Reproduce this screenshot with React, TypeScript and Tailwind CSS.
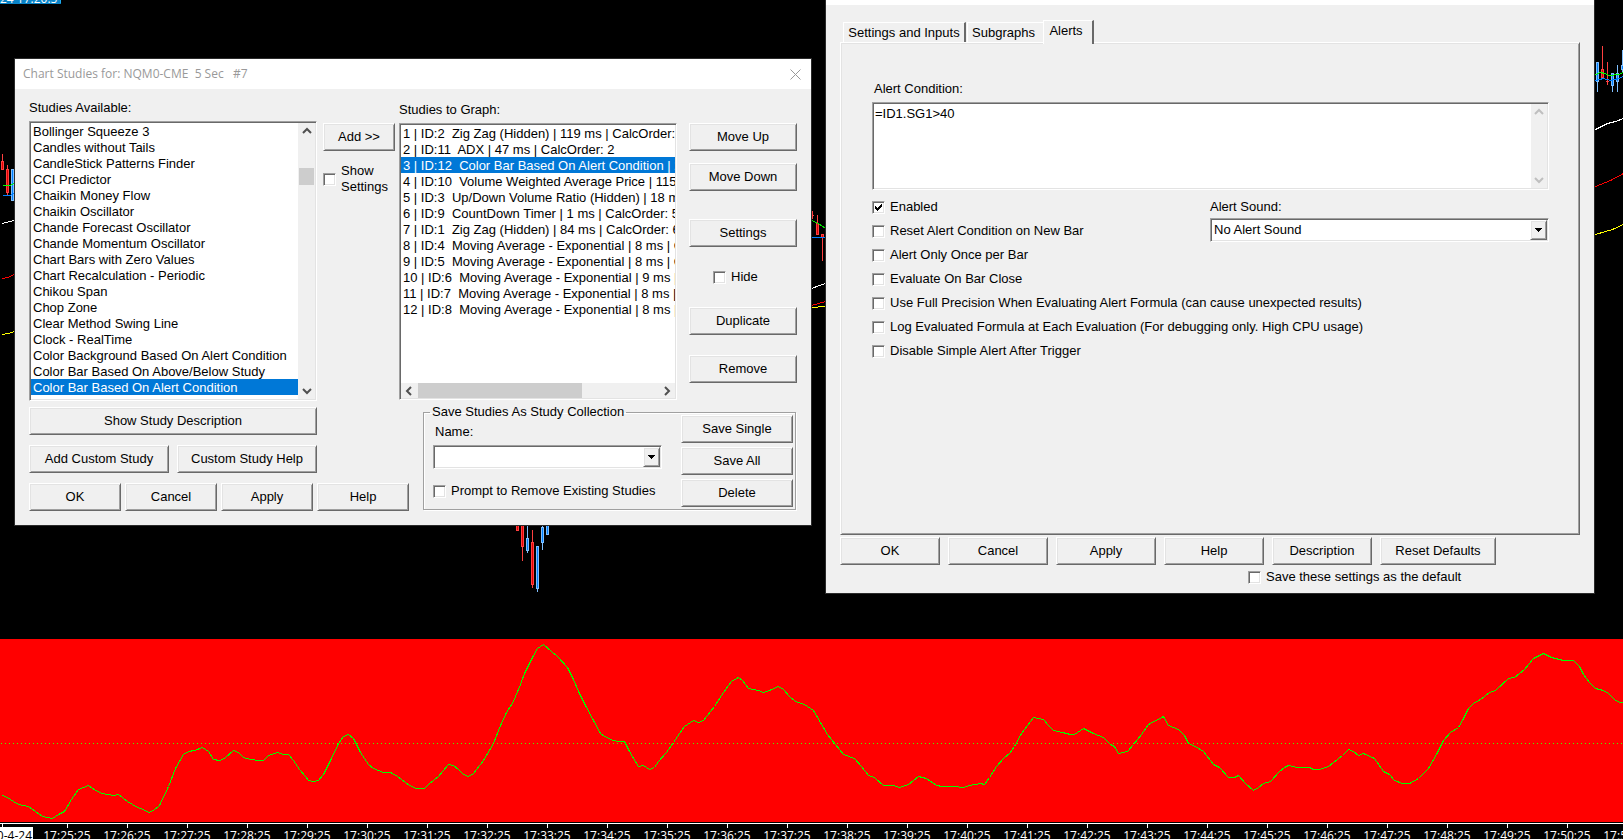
import { useId, useState } from "react";
import type { ReactNode } from "react";
import clsx from "clsx";

const AVAILABLE = [
  "Bollinger Squeeze 3",
  "Candles without Tails",
  "CandleStick Patterns Finder",
  "CCI Predictor",
  "Chaikin Money Flow",
  "Chaikin Oscillator",
  "Chande Forecast Oscillator",
  "Chande Momentum Oscillator",
  "Chart Bars with Zero Values",
  "Chart Recalculation - Periodic",
  "Chikou Span",
  "Chop Zone",
  "Clear Method Swing Line",
  "Clock - RealTime",
  "Color Background Based On Alert Condition",
  "Color Bar Based On Above/Below Study",
  "Color Bar Based On Alert Condition",
  "Color Bar Based On Slope",
];

const GRAPHED = [
  "1 | ID:2  Zig Zag (Hidden) | 119 ms | CalcOrder: 1",
  "2 | ID:11  ADX | 47 ms | CalcOrder: 2",
  "3 | ID:12  Color Bar Based On Alert Condition | 2 ms",
  "4 | ID:10  Volume Weighted Average Price | 115 ms",
  "5 | ID:3  Up/Down Volume Ratio (Hidden) | 18 ms",
  "6 | ID:9  CountDown Timer | 1 ms | CalcOrder: 5",
  "7 | ID:1  Zig Zag (Hidden) | 84 ms | CalcOrder: 6",
  "8 | ID:4  Moving Average - Exponential | 8 ms | CalcOrder: 8",
  "9 | ID:5  Moving Average - Exponential | 8 ms | CalcOrder: 9",
  "10 | ID:6  Moving Average - Exponential | 9 ms | CalcOrder: 10",
  "11 | ID:7  Moving Average - Exponential | 8 ms | CalcOrder: 11",
  "12 | ID:8  Moving Average - Exponential | 8 ms | CalcOrder: 12",
];

const ALERT_OPTIONS = [
  "Enabled",
  "Reset Alert Condition on New Bar",
  "Alert Only Once per Bar",
  "Evaluate On Bar Close",
  "Use Full Precision When Evaluating Alert Formula (can cause unexpected results)",
  "Log Evaluated Formula at Each Evaluation (For debugging only. High CPU usage)",
  "Disable Simple Alert After Trigger",
];

const TIMES = Array.from({ length: 27 }, (_, i) => `17:${25 + i}:25`);

// x, wick high, body top, body bottom, wick low, rising
type Bar = [number, number, number, number, number, boolean];

const BARS: Bar[] = [
  [2, 154, 161, 170, 170, false],
  [7, 165, 169, 193, 195, false],
  [12, 169, 169, 201, 201, true],
  [517, 520, 520, 531, 531, false],
  [522, 520, 520, 547, 561, false],
  [527, 520, 538, 551, 553, true],
  [532, 530, 542, 585, 588, false],
  [537, 546, 546, 589, 592, true],
  [542, 520, 527, 543, 550, true],
  [547, 520, 520, 535, 535, true],
  [812, 211, 215, 216, 219, false],
  [817, 215, 223, 235, 235, false],
  [822, 234, 234, 238, 261, false],
  [1597, 62, 62, 82, 92, true],
  [1602, 46, 69, 78, 78, false],
  [1607, 62, 81, 82, 85, false],
  [1612, 73, 73, 86, 92, true],
  [1617, 65, 73, 82, 92, true],
  [1622, 50, 65, 70, 72, true],
];

const OVERLAYS = [
  { color: "#00ff00", points: "2,185 9,185 14,183" },
  { color: "#0080ff", points: "2,195 9,195 14,193" },
  { color: "#ffffff", points: "2,223 9,221 14,220" },
  { color: "#ff0000", points: "2,278 7,277 14,274" },
  { color: "#ffff00", points: "2,334 8,333 14,331" },
  { color: "#00e000", points: "811,220 818,223 825,228" },
  { color: "#0080ff", points: "811,237 825,237" },
  { color: "#ffffff", points: "811,288 819,285 825,283" },
  { color: "#ff0000", points: "811,305 818,303 825,301" },
  { color: "#ffff00", points: "811,307 825,306" },
  { color: "#00ff00", points: "1595,74 1600,72 1604,73 1609,75 1618,74 1623,72" },
  { color: "#0080ff", points: "1595,80 1603,78 1610,80 1618,78 1623,76" },
  { color: "#ffffff", points: "1595,129 1607,123 1615,121 1623,118" },
  { color: "#ff0000", points: "1595,186 1610,180 1623,173" },
  { color: "#ffff00", points: "1595,234 1612,229 1623,224" },
];

const ADX_LINE =
  "2,156 7,158 13,162 18,165 28,167 35,172 42,177 52,179 58,175 64,172 71,160 78,150 88,146 95,151 102,154 113,156 118,155 127,162 137,168 143,170 148,173 153,171 159,166 168,147 175,129 183,115 188,112 194,111 202,108 208,112 213,120 219,121 224,119 233,111 238,113 243,118 250,120 258,121 263,121 268,116 277,113 283,115 288,115 293,121 299,130 305,137 308,141 313,142 318,141 323,135 330,121 338,104 343,97 348,95 353,99 360,113 368,125 373,129 383,133 390,133 397,137 409,146 416,149 424,149 429,144 438,137 443,131 448,125 453,126 458,130 463,135 468,137 473,134 483,121 493,104 500,86 506,73 513,62 520,45 524,34 532,18 537,9 543,5 551,12 557,17 567,28 573,40 578,52 585,66 593,81 600,94 604,97 613,101 618,102 624,102 629,112 638,127 643,126 649,130 654,128 658,122 666,113 673,103 679,94 684,87 693,81 698,83 703,81 714,67 723,53 731,42 738,38 742,41 748,49 758,51 763,53 769,51 778,47 783,50 789,57 795,62 804,65 813,71 820,83 827,95 835,105 843,115 854,119 861,127 868,136 874,138 883,146 893,146 899,148 908,145 918,137 926,139 936,146 942,147 953,147 963,148 969,146 980,144 984,145 989,138 996,127 1004,118 1009,114 1014,107 1021,94 1033,78 1043,80 1048,86 1053,91 1062,93 1070,95 1074,95 1083,89 1093,94 1103,98 1110,105 1114,107 1118,114 1127,112 1133,105 1141,95 1148,85 1163,77 1168,86 1178,90 1184,96 1188,104 1195,107 1203,112 1213,125 1219,128 1228,138 1234,138 1238,136 1245,144 1253,151 1258,148 1263,144 1270,142 1279,132 1284,128 1288,126 1297,128 1309,128 1313,130 1319,130 1328,127 1342,116 1348,110 1353,112 1358,116 1363,114 1374,119 1383,132 1389,135 1394,141 1402,144 1409,144 1418,139 1428,129 1436,115 1443,101 1450,93 1458,88 1463,79 1468,69 1473,64 1480,60 1489,53 1495,51 1508,39 1514,38 1524,30 1533,19 1543,14 1551,18 1563,21 1573,21 1579,27 1583,35 1589,43 1595,49 1603,51 1608,54 1614,60 1619,63 1623,63";

const RAISED =
  "border border-t-white border-l-white border-r-[#696969] border-b-[#696969] shadow-[inset_1px_1px_#e3e3e3,inset_-1px_-1px_#a0a0a0]";
const SUNKEN =
  "border border-t-[#a0a0a0] border-l-[#a0a0a0] border-r-white border-b-white shadow-[inset_1px_1px_#696969,inset_-1px_-1px_#e3e3e3]";

function PushButton({ children, className }: { children: ReactNode; className?: string }) {
  return (
    <button type="button" className={clsx("h-7 bg-[#f0f0f0] text-center whitespace-nowrap", RAISED, className)}>
      {children}
    </button>
  );
}

function CheckBox({ label, checked = false, className }: { label: string; checked?: boolean; className?: string }) {
  const [on, setOn] = useState(checked);
  return (
    <label className={clsx("flex items-center gap-[5px]", className)}>
      <span className="relative flex shrink-0">
        <input
          type="checkbox"
          checked={on}
          onChange={() => setOn(!on)}
          className={clsx("h-[13px] w-[13px] appearance-none bg-white", SUNKEN)}
        />
        {on && (
          <svg className="pointer-events-none absolute top-[3px] left-[3px]" width="7" height="7" shapeRendering="crispEdges">
            <path d="M0 2v3h1v1h1v1h1v-1h1v-1h1v-1h1v-1h1v-3h-1v1h-1v1h-1v1h-1v1h-1v-1h-1v-1z" />
          </svg>
        )}
      </span>
      <span>{label}</span>
    </label>
  );
}

const ARROWS = {
  up: "M4 10l4-4 4 4",
  down: "M4 6l4 4 4-4",
  left: "M10 4l-4 4 4 4",
  right: "M6 4l4 4-4 4",
};

function ScrollArrow({ dir, color = "#505050" }: { dir: keyof typeof ARROWS; color?: string }) {
  return (
    <button type="button" aria-label={`Scroll ${dir}`} className="flex h-4 w-4 shrink-0 items-center justify-center">
      <svg width="16" height="16" viewBox="0 0 16 16" fill="none" stroke={color} strokeWidth="2">
        <path d={ARROWS[dir]} />
      </svg>
    </button>
  );
}

function ListItems({ items, selected }: { items: string[]; selected: number }) {
  const [current, setCurrent] = useState(selected);
  return (
    <ul role="listbox" className="min-w-0 flex-1 overflow-hidden bg-white leading-[18px]">
      {items.map((item, i) => (
        <li
          key={item}
          role="option"
          aria-selected={i === current}
          onClick={() => setCurrent(i)}
          className={clsx("h-4 overflow-hidden pl-0.5 whitespace-pre", i === current && "bg-[#0078d7] text-white")}
        >
          {item}
        </li>
      ))}
    </ul>
  );
}

function DropDown({ id, options }: { id: string; options: string[] }) {
  return (
    <div className={clsx("relative flex h-6 bg-white p-px", SUNKEN)}>
      <select id={id} className="h-full w-full appearance-none bg-transparent pl-0.5 outline-none">
        {options.map((o) => (
          <option key={o}>{o}</option>
        ))}
      </select>
      <span
        className={clsx(
          "pointer-events-none absolute inset-y-px right-px flex w-[17px] items-center justify-center bg-[#f0f0f0]",
          RAISED
        )}
      >
        <svg width="7" height="4" shapeRendering="crispEdges">
          <path d="M0 0h7v1h-1v1h-1v1h-1v1h-1v-1h-1v-1h-1v-1h-1z" />
        </svg>
      </span>
    </div>
  );
}

function ChartStudiesWindow() {
  const nameId = useId();
  return (
    <section className="absolute top-[58px] left-[14px] w-[798px] border border-[#2b2b2b] bg-[#f0f0f0]">
      <header className="flex h-[30px] items-center justify-between bg-white pr-2 pl-2">
        <h1 className="font-['Open_Sans','Noto_Sans',sans-serif] text-[12px] whitespace-pre text-[#999999]">
          Chart Studies for: NQM0-CME{"  "}5 Sec{"   "}#7
        </h1>
        <button type="button" aria-label="Close" className="flex h-4 w-4 items-center justify-center">
          <svg width="11" height="11" stroke="#999999" fill="none">
            <path d="M0.5 0.5l10 10M10.5 0.5l-10 10" />
          </svg>
        </button>
      </header>

      <div className="px-[14px] pt-[11px] pb-[14px]">
        <div className="flex">
          <div className="w-72">
            <h2>Studies Available:</h2>
            <div className={clsx("mt-[5px] flex h-[280px] p-px", SUNKEN)}>
              <ListItems items={AVAILABLE} selected={16} />
              <div className="flex w-[17px] flex-col items-center bg-[#f0f0f0]">
                <ScrollArrow dir="up" />
                <div className="mt-[29px] h-[17px] w-[15px] bg-[#cdcdcd]" />
                <div className="flex-1" />
                <ScrollArrow dir="down" />
              </div>
            </div>
          </div>

          <div className="ml-1.5 flex w-[72px] flex-col pt-[23px]">
            <PushButton>Add &gt;&gt;</PushButton>
            <CheckBox label="Show Settings" className="mt-3" />
          </div>

          <div className="ml-1 w-[278px] pt-0.5">
            <h2>Studies to Graph:</h2>
            <div className={clsx("mt-[5px] flex h-[277px] flex-col p-px", SUNKEN)}>
              <div className="flex min-h-0 flex-1">
                <ListItems items={GRAPHED} selected={2} />
              </div>
              <div className="flex h-[15px] items-center bg-[#f0f0f0]">
                <ScrollArrow dir="left" />
                <div className="ml-px h-[15px] w-[164px] bg-[#cdcdcd]" />
                <div className="flex-1" />
                <ScrollArrow dir="right" />
              </div>
            </div>
          </div>

          <div className="ml-3 flex flex-1 flex-col pt-[23px]">
            <PushButton>Move Up</PushButton>
            <PushButton className="mt-3">Move Down</PushButton>
            <PushButton className="mt-7">Settings</PushButton>
            <CheckBox label="Hide" className="mt-[22px] ml-6 h-4" />
            <PushButton className="mt-[22px]">Duplicate</PushButton>
            <PushButton className="mt-5">Remove</PushButton>
          </div>
        </div>

        <div className="mt-[3px] flex justify-between">
          <div className="pt-[3px]">
            <div className="w-72">
              <PushButton className="w-full">Show Study Description</PushButton>
              <div className="mt-2.5 flex gap-2">
                <PushButton className="flex-1">Add Custom Study</PushButton>
                <PushButton className="flex-1">Custom Study Help</PushButton>
              </div>
            </div>
            <div className="mt-2.5 flex gap-1">
              <PushButton className="w-[92px]">OK</PushButton>
              <PushButton className="w-[92px]">Cancel</PushButton>
              <PushButton className="w-[92px]">Apply</PushButton>
              <PushButton className="w-[92px]">Help</PushButton>
            </div>
          </div>

          <fieldset className="mr-px flex h-[106px] w-[373px] border border-[#a0a0a0] pr-0.5 pl-[9px] shadow-[1px_1px_#fff,inset_1px_1px_#fff]">
            <legend className="-ml-[3px] h-4 px-0.5">Save Studies As Study Collection</legend>
            <div className="flex w-full justify-between">
              <div className="w-[229px]">
                <label htmlFor={nameId} className="block pt-1 pl-0.5">
                  Name:
                </label>
                <div className="mt-[5px]">
                  <DropDown id={nameId} options={[""]} />
                </div>
                <CheckBox label="Prompt to Remove Existing Studies" className="mt-[14px] h-4" />
              </div>
              <div className="-mt-[5px] flex w-28 flex-col gap-1">
                <PushButton>Save Single</PushButton>
                <PushButton>Save All</PushButton>
                <PushButton>Delete</PushButton>
              </div>
            </div>
          </fieldset>
        </div>
      </div>
    </section>
  );
}

function AlertSettingsWindow() {
  const soundId = useId();
  const conditionId = useId();
  return (
    <section className="absolute top-0 left-[825px] w-[770px] border border-t-0 border-[#2b2b2b] bg-[#f0f0f0]">
      <div className="h-[5px] bg-white" />
      <div className="px-[14px] pt-[15px] pb-2">
        <div role="tablist" className="flex h-[22px] items-end pl-[3px]">
          <button
            role="tab"
            className="h-5 w-[123px] border-t border-r-2 border-l border-t-white border-r-[#696969] border-l-white whitespace-nowrap"
          >
            Settings and Inputs
          </button>
          <button role="tab" className="ml-px h-5 w-[76px] border-t border-l border-white pr-1">
            Subgraphs
          </button>
          <button
            role="tab"
            aria-selected="true"
            className="relative -mb-0.5 h-6 w-[51px] border-t border-r-2 border-l border-t-white border-r-[#696969] border-l-white bg-[#f0f0f0] pr-1 pb-1"
          >
            Alerts
          </button>
        </div>

        <div className={clsx("h-[493px] pt-[38px] pr-[30px] pl-[31px]", RAISED)}>
          <label htmlFor={conditionId} className="block pl-0.5">
            Alert Condition:
          </label>
          <div className={clsx("mt-[5px] flex h-[88px] bg-white p-px", SUNKEN)}>
            <textarea
              id={conditionId}
              defaultValue="=ID1.SG1>40"
              className="flex-1 resize-none overflow-hidden pt-0.5 pl-px outline-none"
            />
            <div className="flex w-4 flex-col justify-between bg-[#f0f0f0]">
              <ScrollArrow dir="up" color="#bfbfbf" />
              <ScrollArrow dir="down" color="#bfbfbf" />
            </div>
          </div>

          <div className="flex justify-between pt-[9px]">
            <div className="flex flex-col gap-2">
              {ALERT_OPTIONS.map((label, i) => (
                <CheckBox key={label} label={label} checked={i === 0} className="h-4 whitespace-nowrap" />
              ))}
            </div>
            <div className="-ml-40 w-[339px] shrink-0 self-start">
              <label htmlFor={soundId} className="block">
                Alert Sound:
              </label>
              <div className="mt-[3px]">
                <DropDown id={soundId} options={["No Alert Sound"]} />
              </div>
            </div>
          </div>
        </div>

        <div className="mt-0.5 flex gap-2">
          <PushButton className="w-[100px]">OK</PushButton>
          <PushButton className="w-[100px]">Cancel</PushButton>
          <PushButton className="w-[100px]">Apply</PushButton>
          <PushButton className="w-[100px]">Help</PushButton>
          <PushButton className="w-[100px]">Description</PushButton>
          <PushButton className="w-[116px]">Reset Defaults</PushButton>
        </div>
        <CheckBox label="Save these settings as the default" className="mt-1 ml-[408px] h-4" />
      </div>
    </section>
  );
}

function PriceChart() {
  return (
    <svg className="h-full w-full" shapeRendering="crispEdges" fill="none">
      {BARS.map(([x, high, top, bottom, low, rising]) => {
        const edge = rising ? "#80c0ff" : "#ff4040";
        return (
          <g key={x}>
            <path d={`M${x + 0.5} ${high}V${low}`} stroke={edge} />
            <rect x={x - 1} y={top} width="3" height={bottom - top} fill={edge} />
            {bottom - top > 2 && (
              <rect x={x} y={top + 1} width="1" height={bottom - top - 2} fill={rising ? "#0080ff" : "#e00000"} />
            )}
          </g>
        );
      })}
      {OVERLAYS.map((line) => (
        <polyline key={line.points} points={line.points} stroke={line.color} transform="translate(0.5 0.5)" />
      ))}
    </svg>
  );
}

export default function App() {
  return (
    <main className="relative flex h-screen flex-col overflow-hidden bg-black font-['Liberation_Sans',Arial,sans-serif] text-[13px] leading-4 text-black">
      <div className="relative min-h-0 flex-1">
        <PriceChart />
        <div className="absolute top-0 left-0 flex h-1 w-[61px] items-end overflow-hidden bg-[#0a84c8] font-['Open_Sans','Noto_Sans',sans-serif] text-[12px] whitespace-nowrap text-white">
          <span className="-mb-[3px]">24 17:20:51</span>
        </div>
      </div>

      <div className="h-[183px] bg-[#ff0000]">
        <svg className="h-full w-full" shapeRendering="crispEdges" fill="none">
          <line x1="1" x2="100%" y1="104.5" y2="104.5" stroke="#40ff00" strokeDasharray="1 3" />
          <polyline points={ADX_LINE} stroke="#00ff00" transform="translate(0.5 0.5)" />
        </svg>
      </div>
      <div className="mt-px flex h-4 overflow-hidden border-t border-white font-['Open_Sans','Noto_Sans',sans-serif] text-[12px] text-white">
        <div className="mr-1 w-[33px] shrink-0">
          <div className="ml-0.5 h-[3px] w-px bg-white" />
          <div className="flex h-[18px] items-center justify-end overflow-hidden bg-white pr-px whitespace-nowrap text-black">
            2020-4-24
          </div>
        </div>
        {TIMES.map((time) => (
          <div key={time} className="flex w-[60px] shrink-0 flex-col items-center">
            <div className="h-1 w-px shrink-0 bg-white" />
            <span>{time}</span>
          </div>
        ))}
      </div>

      <ChartStudiesWindow />
      <AlertSettingsWindow />
    </main>
  );
}
